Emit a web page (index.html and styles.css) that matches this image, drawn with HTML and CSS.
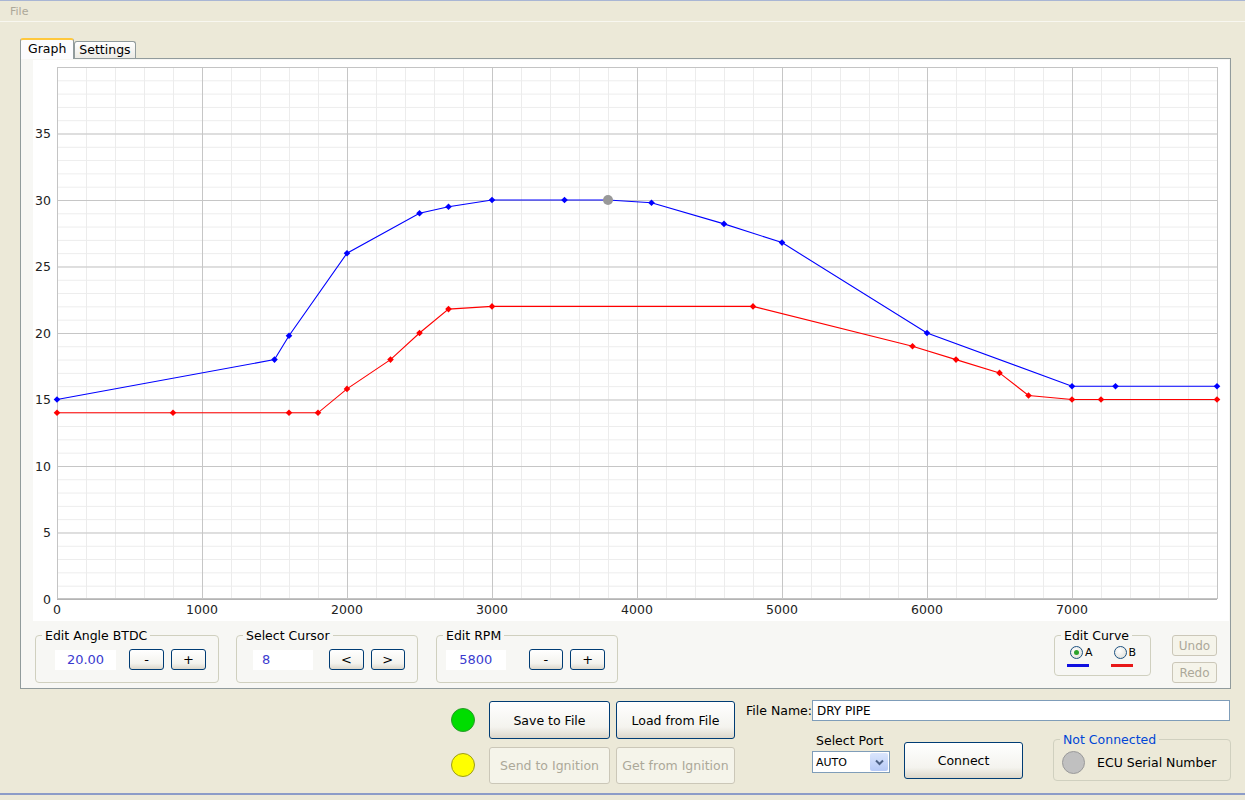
FILE: index.html
```html
<!DOCTYPE html>
<html lang="en">
<head>
    <meta charset="UTF-8">
    <meta name="viewport" content="width=device-width, initial-scale=1.0">
    <title>Ignition Curve Editor</title>
    <link rel="stylesheet" href="styles.css">
</head>
<body>
    <div class="menubar"><span class="menu-item">File</span></div>

    <div class="workspace">
        <div class="tabs">
            <div class="tab active">Graph</div>
            <div class="tab">Settings</div>
        </div>

        <div class="pane">
            <!-- advance curve chart: x 0..8000 rpm, y 0..40 deg -->
            <svg class="chart" width="1196" height="561" viewBox="0 0 1196 561">
                <defs>
                    <pattern id="minorGrid" x="24" y="7" width="29" height="13.3" patternUnits="userSpaceOnUse">
                        <path d="M0 0.5 H29 M0.5 0 V13.3" stroke="#ececec" stroke-width="1" fill="none"/>
                    </pattern>
                    <pattern id="majorGrid" x="24" y="7" width="145" height="66.5" patternUnits="userSpaceOnUse">
                        <path d="M0 0.5 H145 M0.5 0 V66.5" stroke="#c6c6c6" stroke-width="1" fill="none"/>
                    </pattern>
                    <marker id="ptA" viewBox="-4 -4 8 8" refX="0" refY="0" markerWidth="8" markerHeight="8" markerUnits="userSpaceOnUse">
                        <path d="M0 -3.3 L3.3 0 L0 3.3 L-3.3 0 Z" fill="#0000ff"/>
                    </marker>
                    <marker id="ptB" viewBox="-4 -4 8 8" refX="0" refY="0" markerWidth="8" markerHeight="8" markerUnits="userSpaceOnUse">
                        <path d="M0 -3.3 L3.3 0 L0 3.3 L-3.3 0 Z" fill="#ff0000"/>
                    </marker>
                </defs>

                <rect x="24" y="7" width="1160" height="532" fill="#fff"/>
                <rect x="24" y="7" width="1160" height="532" fill="url(#minorGrid)"/>
                <rect x="24" y="7" width="1160" height="532" fill="url(#majorGrid)"/>
                <rect x="24.5" y="7.5" width="1160" height="531" fill="none" stroke="#c4c4c4"/>
                <line x1="24" y1="539.5" x2="1184" y2="539.5" stroke="#b4b4b4"/>

                <g class="axis-y">
                    <text x="18" y="544">0</text>
                    <text x="18" y="477">5</text>
                    <text x="18" y="410.5">10</text>
                    <text x="18" y="344">15</text>
                    <text x="18" y="277.5">20</text>
                    <text x="18" y="211">25</text>
                    <text x="18" y="144.5">30</text>
                    <text x="18" y="78">35</text>
                </g>
                <g class="axis-x">
                    <text x="24" y="554" text-anchor="start">0</text>
                    <text x="169" y="554">1000</text>
                    <text x="314" y="554">2000</text>
                    <text x="459" y="554">3000</text>
                    <text x="604" y="554">4000</text>
                    <text x="749" y="554">5000</text>
                    <text x="894" y="554">6000</text>
                    <text x="1039" y="554">7000</text>
                </g>

                <!-- curve B -->
                <polyline class="curve curve-b" points="24,352.8 140,352.8 256,352.8 285,352.8 314,328.9 357.5,299.6 386.5,273 415.5,249.1 459,246.4 720,246.4 879.5,286.3 923,299.6 966.5,312.9 995.5,335.5 1039,339.5 1068,339.5 1184,339.5"/>
                <!-- curve A -->
                <polyline class="curve curve-a" points="24,339.5 241.5,299.6 256,275.7 314,193.2 386.5,153.3 415.5,146.7 459,140 531.5,140 575,140 618.5,142.7 691,163.9 749,182.6 894,273 1039,326.2 1082.5,326.2 1184,326.2"/>
                <!-- selected cursor -->
                <circle cx="575" cy="140" r="5" fill="#999"/>
            </svg>

            <div class="controls">
                <fieldset class="group group-angle">
                    <legend>Edit Angle BTDC</legend>
                    <div class="group-body">
                        <div class="value">20.00</div>
                        <button class="btn btn-small">-</button>
                        <button class="btn btn-small">+</button>
                    </div>
                </fieldset>

                <fieldset class="group group-cursor">
                    <legend>Select Cursor</legend>
                    <div class="group-body">
                        <div class="value value-left">8</div>
                        <button class="btn btn-small">&lt;</button>
                        <button class="btn btn-small">&gt;</button>
                    </div>
                </fieldset>

                <fieldset class="group group-rpm">
                    <legend>Edit RPM</legend>
                    <div class="group-body">
                        <div class="value">5800</div>
                        <button class="btn btn-small">-</button>
                        <button class="btn btn-small">+</button>
                    </div>
                </fieldset>

                <fieldset class="group group-curve">
                    <legend>Edit Curve</legend>
                    <div class="group-body">
                        <div class="curve-opt">
                            <div class="radio-line"><span class="radio checked"></span>A</div>
                            <div class="swatch swatch-a"></div>
                        </div>
                        <div class="curve-opt">
                            <div class="radio-line"><span class="radio"></span>B</div>
                            <div class="swatch swatch-b"></div>
                        </div>
                    </div>
                </fieldset>

                <div class="history">
                    <button class="btn btn-tiny" disabled>Undo</button>
                    <button class="btn btn-tiny" disabled>Redo</button>
                </div>
            </div>
        </div>
    </div>

    <div class="bottom">
        <div class="leds">
            <span class="led led-green"></span>
            <span class="led led-yellow"></span>
        </div>

        <div class="file-btns">
            <button class="btn btn-big">Save to File</button>
            <button class="btn btn-big">Load from File</button>
            <button class="btn btn-big" disabled>Send to Ignition</button>
            <button class="btn btn-big" disabled>Get from Ignition</button>
        </div>

        <div class="side">
            <div class="file-row">
                <label for="fileName">File Name:</label>
                <input type="text" id="fileName" value="DRY PIPE">
            </div>
            <div class="port-row">
                <div class="port">
                    <div class="port-label">Select Port</div>
                    <div class="select">
                        <span>AUTO</span>
                        <span class="select-arrow">
                            <svg width="9" height="7" viewBox="0 0 9 7"><path d="M1 1.5 L4.5 5 L8 1.5" stroke="#4d6185" stroke-width="2" fill="none"/></svg>
                        </span>
                    </div>
                </div>
                <button class="btn btn-connect">Connect</button>
                <fieldset class="conn">
                    <legend>Not Connected</legend>
                    <div class="conn-body">
                        <span class="led led-gray"></span>
                        <span>ECU Serial Number</span>
                    </div>
                </fieldset>
            </div>
        </div>
    </div>
</body>
</html>
```

FILE: styles.css
```css
body {
    margin: 0;
    width: 1245px;
    height: 800px;
    overflow: hidden;
    background-color: #ece9d8;
    font-family: "DejaVu Sans", sans-serif;
    font-size: 12.5px;
    color: #000;
}

.menubar {
    height: 20px;
    border-top: 1px solid #a9b6d4;
    border-bottom: 1px solid #f8f7f0;
    display: flex;
    align-items: center;
    padding-left: 10px;
    color: #aca899;
    font-size: 11px;
}

.workspace {
    padding: 15px 14px 0 20px;
}

.tabs {
    display: flex;
    align-items: flex-end;
    height: 21px;
}

.tab {
    height: 16px;
    line-height: 16px;
    padding: 0 4px;
    border: 1px solid #919b9c;
    border-bottom: none;
    border-radius: 3px 3px 0 0;
    background: linear-gradient(#ffffff, #ecebe5);
    font-size: 12.5px;
}

.tab.active {
    height: 19px;
    line-height: 18px;
    padding: 0 7px;
    border-top: 2px solid #ffc83c;
    background: #fcfcfe;
    margin-bottom: -1px;
    position: relative;
    z-index: 1;
}

.pane {
    height: 631px;
    box-sizing: border-box;
    border: 1px solid #919b9c;
    background-color: #f7f7f4;
}

.chart {
    display: block;
    margin: 1px 0 0 12px;
    background-color: #fff;
}

.chart text {
    font-family: "DejaVu Sans", sans-serif;
    font-size: 12.5px;
    fill: #222;
}

.axis-y text {
    text-anchor: end;
}

.axis-x text {
    text-anchor: middle;
}

.curve {
    fill: none;
    stroke-width: 1.1;
}

.curve-a {
    stroke: #0000ff;
    marker-start: url(#ptA);
    marker-mid: url(#ptA);
    marker-end: url(#ptA);
}

.curve-b {
    stroke: #ff0000;
    marker-start: url(#ptB);
    marker-mid: url(#ptB);
    marker-end: url(#ptB);
}

/* controls under the chart */
.controls {
    display: flex;
    align-items: flex-start;
    margin-top: 7px;
    padding-left: 14px;
}

.group {
    margin: 0;
    padding: 0;
    box-sizing: border-box;
    border: 1px solid #d0d0bf;
    border-radius: 4px;
    min-inline-size: 0;
}

.group legend {
    margin-left: 6px;
    padding: 0 3px;
    line-height: 15px;
    color: #000;
}

.group-body {
    display: flex;
    align-items: center;
    padding: 6px 12px 12px 19px;
}

.group-angle {
    width: 184px;
}

.group-cursor {
    width: 182px;
    margin-left: 17px;
}

.group-cursor .group-body {
    padding-left: 16px;
}

.group-rpm {
    width: 182px;
    margin-left: 18px;
}

.group-rpm .group-body {
    padding-left: 9px;
}

.value {
    width: 61px;
    height: 20px;
    line-height: 20px;
    background-color: #fff;
    color: #3b3bcf;
    text-align: center;
    font-size: 13px;
}

.value-left {
    text-align: left;
    box-sizing: border-box;
    padding-left: 9px;
}

.group-angle .value {
    margin-right: 13px;
}

.group-cursor .value {
    margin-right: 16px;
}

.group-rpm .value {
    width: 60px;
    margin-right: 23px;
}

.btn {
    font-family: "DejaVu Sans", sans-serif;
    font-size: 12.5px;
    color: #000;
    border: 1px solid #003c74;
    border-radius: 3px;
    background: linear-gradient(#ffffff, #f4f3ee 70%, #dcd7cb);
    padding: 0;
    cursor: pointer;
}

.btn:disabled {
    border-color: #cbc7b8;
    background: #f5f4ea;
    color: #aca899;
    cursor: default;
}

.btn-small {
    width: 35px;
    height: 21px;
    margin-right: 7px;
    font-size: 13px;
}

.btn-small:last-child {
    margin-right: 0;
}

.group-curve {
    width: 97px;
    margin-left: auto;
}

.group-curve .group-body {
    padding: 3px 0 8px 12px;
    align-items: flex-start;
}

.curve-opt {
    display: flex;
    flex-direction: column;
    margin-right: 18px;
}

.radio-line {
    display: flex;
    align-items: center;
    font-size: 11px;
    padding-left: 3px;
}

.radio {
    width: 11px;
    height: 11px;
    border: 1px solid #1c5180;
    border-radius: 50%;
    background: radial-gradient(circle at 40% 35%, #ffffff, #dcdcd4);
    margin-right: 2px;
    display: flex;
    align-items: center;
    justify-content: center;
}

.radio.checked::after {
    content: "";
    width: 5px;
    height: 5px;
    border-radius: 50%;
    background-color: #2ba22b;
}

.swatch {
    width: 22px;
    height: 3px;
    margin-top: 5px;
}

.swatch-a {
    background-color: #1010e0;
}

.swatch-b {
    background-color: #e81818;
}

.history {
    display: flex;
    flex-direction: column;
    gap: 6px;
    margin: 7px 13px 0 21px;
}

.btn-tiny {
    width: 45px;
    height: 21px;
    font-size: 12px;
}

/* bottom strip */
.bottom {
    height: 106px;
    box-sizing: border-box;
    display: flex;
    align-items: flex-start;
    padding: 12px 0 0 451px;
    border-bottom: 2px solid #8c9cc8;
}

.leds {
    display: flex;
    flex-direction: column;
    width: 24px;
}

.led {
    display: inline-block;
    box-sizing: border-box;
    border-radius: 50%;
}

.leds .led {
    width: 24px;
    height: 24px;
}

.led-green {
    margin-top: 7px;
    background-color: #00dd00;
    border: 1px solid #2a9a2a;
}

.led-yellow {
    margin-top: 21px;
    background-color: #ffff00;
    border: 1px solid #9c9c1a;
}

.file-btns {
    display: grid;
    grid-template-columns: 121px 119px;
    grid-template-rows: 38px 37px;
    column-gap: 6px;
    row-gap: 8px;
    margin-left: 14px;
}

.btn-big {
    font-size: 12.5px;
}

.side {
    margin: -1px 0 0 11px;
    display: flex;
    flex-direction: column;
}

.file-row {
    display: flex;
    align-items: center;
}

.file-row label {
    width: 66px;
}

.file-row input {
    width: 418px;
    height: 21px;
    box-sizing: border-box;
    border: 1px solid #7f9db9;
    padding: 0 4px;
    font-family: "DejaVu Sans", sans-serif;
    font-size: 12px;
}

.port-row {
    display: flex;
    align-items: flex-start;
    margin: 12px 0 0 66px;
}

.port {
    width: 78px;
}

.port-label {
    line-height: 15px;
    padding-left: 4px;
}

.select {
    margin-top: 3px;
    height: 22px;
    box-sizing: border-box;
    border: 1px solid #7f9db9;
    background-color: #fff;
    display: flex;
    align-items: center;
    justify-content: space-between;
    padding: 0 1px 0 3px;
    font-size: 11px;
}

.select-arrow {
    width: 18px;
    height: 18px;
    border-radius: 2px;
    background: linear-gradient(#dbe6fd, #b6c9f6);
    display: flex;
    align-items: center;
    justify-content: center;
}

.btn-connect {
    width: 119px;
    height: 37px;
    margin: 9px 0 0 14px;
}

.conn {
    width: 178px;
    height: 49px;
    box-sizing: border-box;
    margin: -1px 0 0 30px;
    padding: 0;
    border: 1px solid #d0d0bf;
    border-radius: 4px;
    min-inline-size: 0;
}

.conn legend {
    margin-left: 6px;
    padding: 0 3px;
    line-height: 15px;
    color: #0046d5;
}

.conn-body {
    display: flex;
    align-items: center;
    height: 30px;
    padding-left: 8px;
}

.led-gray {
    width: 23px;
    height: 23px;
    margin-right: 12px;
    background-color: #c0c0c0;
    border: 1px solid #9a9a9a;
}
```
